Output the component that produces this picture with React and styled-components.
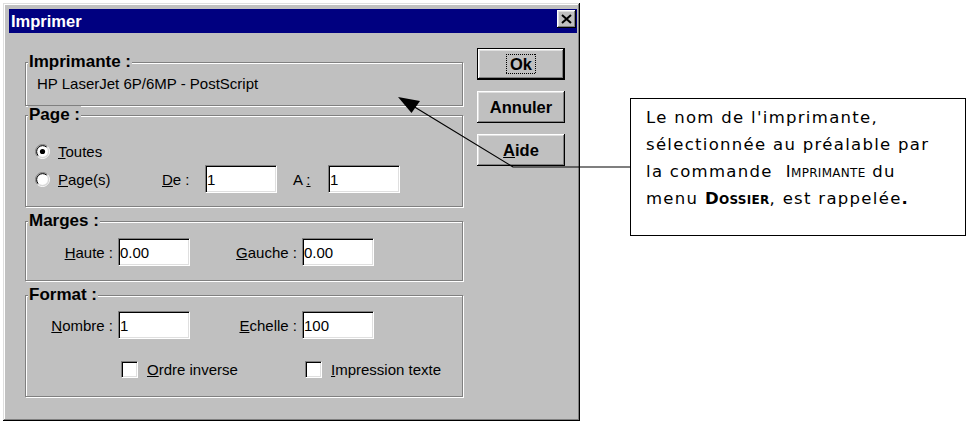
import React from "react";
import styled, { createGlobalStyle } from "styled-components";

const GlobalStyle = createGlobalStyle`
  html, body {
    margin: 0;
    padding: 0;
    background: #fff;
  }
  body {
    font-family: "Liberation Sans", Arial, sans-serif;
    color: #000;
  }
`;

const Page = styled.div`
  position: relative;
  width: 970px;
  height: 424px;
  box-sizing: border-box;
  padding: 3px 0 0 3px;
  display: flex;
  align-items: flex-start;
  overflow: hidden;
`;

const Dialog = styled.div`
  flex-shrink: 0;
  width: 577px;
  height: 418px;
  box-sizing: border-box;
  padding: 6px 3px 0 6px;
  background: #c0c0c0;
  box-shadow: inset -1px -1px #000, inset 1px 1px #dfdfdf,
    inset -2px -2px #808080, inset 2px 2px #fff;
`;

const TitleBar = styled.div`
  height: 24px;
  background: #000080;
  display: flex;
  justify-content: space-between;
  padding: 0 1px 0 2px;
`;

const Title = styled.span`
  align-self: center;
  color: #fff;
  font-weight: bold;
  font-size: 16.5px;
`;

const CloseButton = styled.button`
  margin-top: 1px;
  width: 19px;
  height: 18px;
  padding: 0;
  border: none;
  background: #c0c0c0;
  box-shadow: inset -1px -1px #000, inset 1px 1px #fff,
    inset -2px -2px #808080, inset 2px 2px #dfdfdf;
  display: flex;
  align-items: center;
  justify-content: center;
`;

const Body = styled.div`
  display: flex;
  align-items: flex-start;
  gap: 14px;
  padding: 15px 0 0 16px;
`;

const Groups = styled.div`
  display: flex;
  flex-direction: column;
  margin-top: 5px;
  width: 438px;
`;

const Group = styled.fieldset`
  box-sizing: border-box;
  margin: ${(p) => p.$mt || 0}px 0 0 0;
  padding: 0;
  min-width: 0;
  height: ${(p) => p.$h}px;
  border: 1px solid #808080;
  box-shadow: inset 1px 1px #fff, 1px 1px #fff;
`;

const Legend = styled.legend`
  margin-left: 2px;
  padding: 0 1px;
  background: #c0c0c0;
  font-weight: bold;
  font-size: 17px;
  line-height: 18px;
`;

const PrinterName = styled.div`
  padding: 4px 0 0 11px;
  font-size: 15px;
  line-height: 18px;
`;

const GroupContent = styled.div`
  display: flex;
  flex-direction: column;
  padding: ${(p) => p.$pt}px 0 0 ${(p) => p.$pl || 0}px;
`;

const Row = styled.div`
  display: flex;
  align-items: center;
  height: ${(p) => p.$h || 28}px;
  margin-top: ${(p) => p.$mt || 0}px;
  padding-left: ${(p) => p.$pl || 0}px;
  font-size: 15px;
`;

const RadioItem = styled.label`
  display: flex;
  align-items: center;
  gap: 8px;
  width: ${(p) => p.$w || "auto"};
`;

const FieldLabel = styled.span`
  box-sizing: border-box;
  width: ${(p) => p.$w}px;
  margin-left: ${(p) => p.$ml || 0}px;
  text-align: ${(p) => (p.$right ? "right" : "left")};
  padding-right: ${(p) => (p.$right ? 5 : 0)}px;
  white-space: nowrap;
`;

const TextBox = styled.div`
  box-sizing: border-box;
  width: 72px;
  height: 28px;
  background: #fff;
  border-top: 1px solid #808080;
  border-left: 1px solid #808080;
  border-bottom: 1px solid #fff;
  border-right: 1px solid #fff;
  box-shadow: inset 1px 1px #000, inset -1px -1px #dfdfdf;
  padding: 0 0 0 1px;
  display: flex;
  align-items: center;
  font-size: 15px;
`;

const CheckItem = styled.label`
  display: flex;
  align-items: center;
  gap: 9px;
  width: ${(p) => p.$w || "auto"};
`;

const CheckBox = styled.span`
  box-sizing: border-box;
  width: 17px;
  height: 17px;
  background: #fff;
  border-top: 1px solid #808080;
  border-left: 1px solid #808080;
  border-bottom: 1px solid #fff;
  border-right: 1px solid #fff;
  box-shadow: inset 1px 1px #000, inset -1px -1px #dfdfdf;
`;

const Buttons = styled.div`
  display: flex;
  flex-direction: column;
  gap: 11px;
`;

const Button = styled.button`
  box-sizing: border-box;
  width: 88px;
  height: 32px;
  padding: 0;
  background: #c0c0c0;
  color: #000;
  font-family: "Liberation Sans", Arial, sans-serif;
  font-weight: bold;
  font-size: 16.5px;
  border: ${(p) => (p.$default ? "1px solid #000" : "none")};
  box-shadow: inset -1px -1px #000, inset 1px 1px #fff,
    inset -2px -2px #808080, inset 2px 2px #dfdfdf;
  display: flex;
  align-items: center;
  justify-content: center;
`;

const dots = "#000 0 1px, transparent 1px 2px";

const Focus = styled.span`
  display: inline-block;
  padding: 2px 4px;
  line-height: 16px;
  background:
    repeating-linear-gradient(90deg, ${dots}) top / 100% 1px no-repeat,
    repeating-linear-gradient(90deg, ${dots}) bottom / 100% 1px no-repeat,
    repeating-linear-gradient(180deg, ${dots}) left / 1px 100% no-repeat,
    repeating-linear-gradient(180deg, ${dots}) right / 1px 100% no-repeat;
`;

const Callout = styled.div`
  flex-shrink: 0;
  box-sizing: border-box;
  margin: 95px 0 0 50px;
  width: 336px;
  height: 138px;
  border: 1px solid #000;
  background: #fff;
  padding: 5px 0 0 15px;
  font-family: "DejaVu Sans", Verdana, sans-serif;
  font-size: 16.5px;
  letter-spacing: 1.3px;
  line-height: 27px;
  white-space: nowrap;
`;

const SmallCaps = styled.span`
  font-variant: small-caps;
  letter-spacing: 0.3px;
  font-weight: ${(p) => (p.$bold ? "bold" : "normal")};
`;

const Overlay = styled.svg`
  position: absolute;
  left: 0;
  top: 0;
  pointer-events: none;
`;

function Radio({ checked }) {
  return (
    <svg width="15" height="15" viewBox="0 0 15 15">
      <circle cx="7.5" cy="7.5" r="5.8" fill="#fff" />
      <path d="M2.55 12.45 A7 7 0 0 1 12.45 2.55" fill="none" stroke="#808080" />
      <path d="M12.45 2.55 A7 7 0 0 1 2.55 12.45" fill="none" stroke="#fff" />
      <path d="M3.26 11.74 A6 6 0 0 1 11.74 3.26" fill="none" stroke="#000" />
      <path d="M11.74 3.26 A6 6 0 0 1 3.26 11.74" fill="none" stroke="#dfdfdf" />
      {checked && <circle cx="7.5" cy="7.5" r="2.6" fill="#000" />}
    </svg>
  );
}

function CloseIcon() {
  return (
    <svg width="11" height="10" viewBox="0 0 11 10">
      <path d="M1 1 L10 9 M10 1 L1 9" stroke="#000" strokeWidth="2" />
    </svg>
  );
}

export default function App() {
  return (
    <>
      <GlobalStyle />
      <Page>
        <Dialog>
          <TitleBar>
            <Title>Imprimer</Title>
            <CloseButton>
              <CloseIcon />
            </CloseButton>
          </TitleBar>
          <Body>
            <Groups>
              <Group $h={53}>
                <Legend>Imprimante :</Legend>
                <PrinterName>HP LaserJet 6P/6MP - PostScript</PrinterName>
              </Group>

              <Group $h={101}>
                <Legend>Page :</Legend>
                <GroupContent $pt={14} $pl={9}>
                  <Row $h={27}>
                    <RadioItem>
                      <Radio checked />
                      <span>
                        <u>T</u>outes
                      </span>
                    </RadioItem>
                  </Row>
                  <Row $h={28}>
                    <RadioItem $w="127px">
                      <Radio />
                      <span>
                        <u>P</u>age(s)
                      </span>
                    </RadioItem>
                    <FieldLabel $w={43}>
                      <u>D</u>e :
                    </FieldLabel>
                    <TextBox>1</TextBox>
                    <FieldLabel $w={35} $ml={16}>
                      A <u>:</u>
                    </FieldLabel>
                    <TextBox>1</TextBox>
                  </Row>
                </GroupContent>
              </Group>

              <Group $h={69} $mt={5}>
                <Legend>Marges :</Legend>
                <GroupContent $pt={8}>
                  <Row>
                    <FieldLabel $w={92} $right>
                      <u>H</u>aute :
                    </FieldLabel>
                    <TextBox>0.00</TextBox>
                    <FieldLabel $w={112} $right>
                      <u>G</u>auche :
                    </FieldLabel>
                    <TextBox>0.00</TextBox>
                  </Row>
                </GroupContent>
              </Group>

              <Group $h={111} $mt={5}>
                <Legend>Format :</Legend>
                <GroupContent $pt={7}>
                  <Row>
                    <FieldLabel $w={92} $right>
                      <u>N</u>ombre :
                    </FieldLabel>
                    <TextBox>1</TextBox>
                    <FieldLabel $w={112} $right>
                      <u>E</u>chelle :
                    </FieldLabel>
                    <TextBox>100</TextBox>
                  </Row>
                  <Row $h={17} $mt={22} $pl={95}>
                    <CheckItem $w="184px">
                      <CheckBox />
                      <span>
                        <u>O</u>rdre inverse
                      </span>
                    </CheckItem>
                    <CheckItem>
                      <CheckBox />
                      <span>
                        <u>I</u>mpression texte
                      </span>
                    </CheckItem>
                  </Row>
                </GroupContent>
              </Group>
            </Groups>

            <Buttons>
              <Button $default>
                <Focus>Ok</Focus>
              </Button>
              <Button>Annuler</Button>
              <Button>
                <span>
                  <u>A</u>ide
                </span>
              </Button>
            </Buttons>
          </Body>
        </Dialog>

        <Callout>
          Le nom de l'imprimante,
          <br />
          sélectionnée au préalable par
          <br />
          la commande&nbsp; <SmallCaps>Imprimante</SmallCaps> du
          <br />
          menu <SmallCaps $bold>Dossier</SmallCaps>, est rappelée<b>.</b>
        </Callout>

        <Overlay width="970" height="424" viewBox="0 0 970 424">
          <path d="M408 103 L513 167 L630 167" fill="none" stroke="#000" strokeWidth="1.2" />
          <polygon points="398,97 411.5,113 420,101" fill="#000" />
        </Overlay>
      </Page>
    </>
  );
}
